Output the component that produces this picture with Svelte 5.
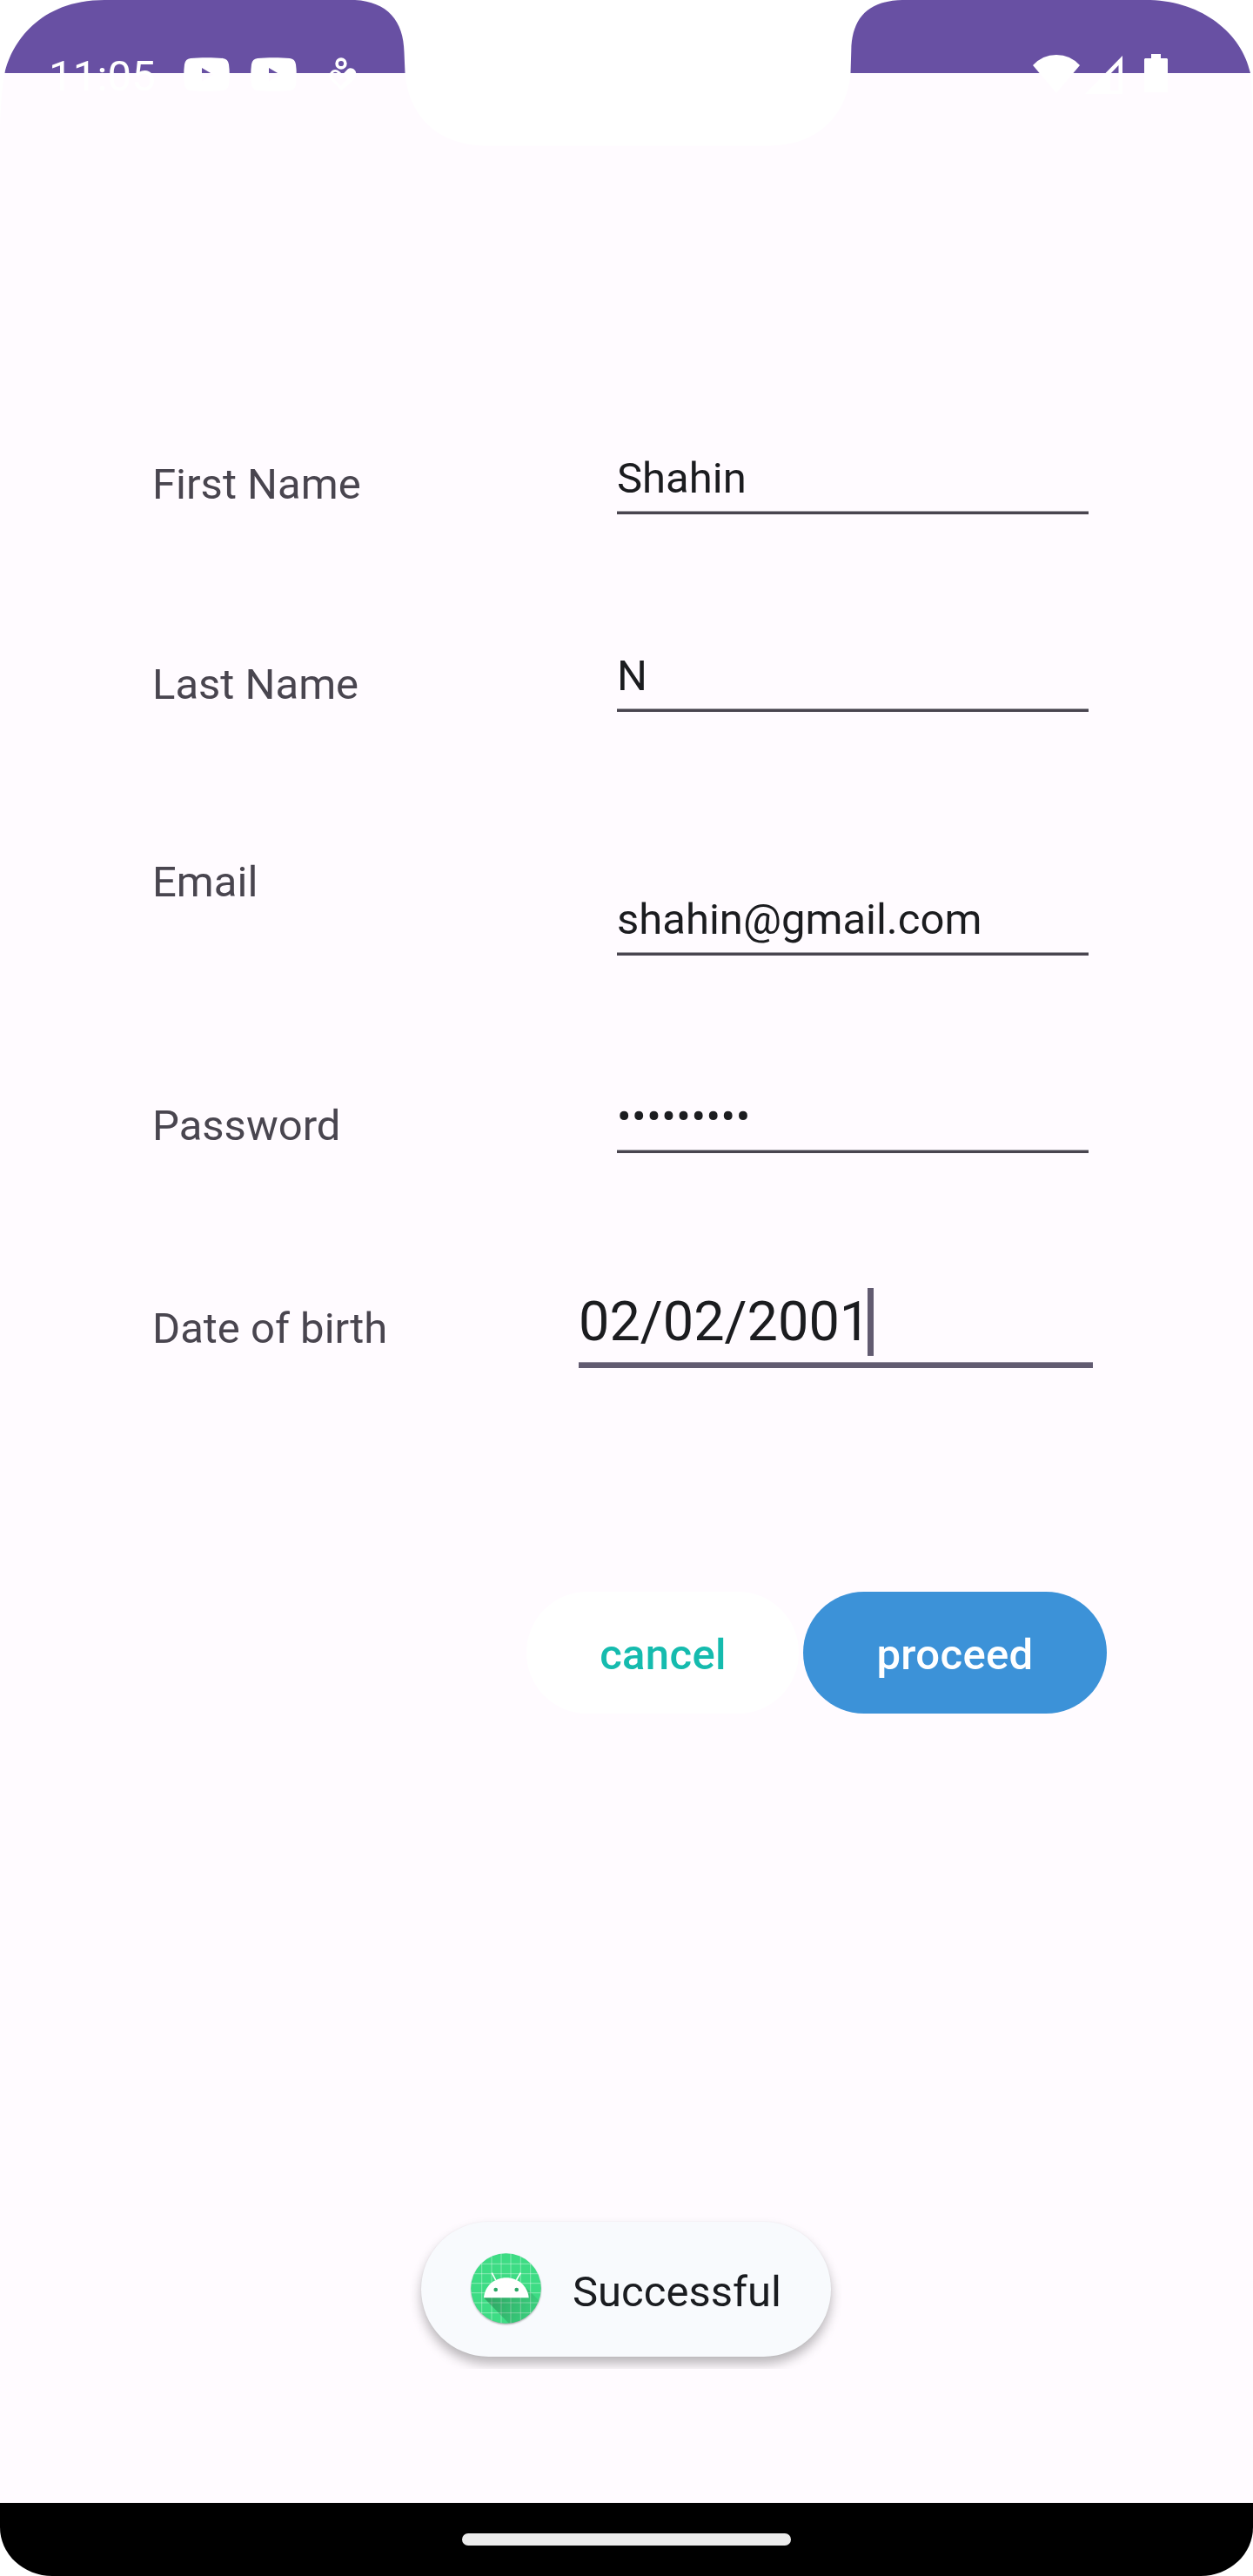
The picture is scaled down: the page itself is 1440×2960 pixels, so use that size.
<script>
  const rows = [
    { id: 'first', label: 'First Name', value: 'Shahin' },
    { id: 'last', label: 'Last Name', value: 'N' },
    { id: 'email', label: 'Email', value: 'shahin@gmail.com' },
    { id: 'password', label: 'Password', value: '•••••••••' },
    { id: 'dob', label: 'Date of birth', value: '02/02/2001', focused: true },
  ];
  const gridX = [12.7, 24, 35, 46, 57.3, 68.7];
  const gridY = [12.3, 23.7, 34.7, 45.7, 57, 68.7];
</script>

<div class="screen">
  <header class="status">
    <!-- Rounded display corners and camera notch -->
    <svg class="cutout" width="1440" height="170" viewBox="0 0 1440 170" fill="#fff">
      <path d="M0 0H120C45 0 13 50 5.5 84C1.5 104 0 130 0 168Z" />
      <path d="M408 0C445 2 464 24 464.5 60L465.5 84C469 128 498 167 558 167.5H884C944 167 974 128 977.5 84L978.3 58C979 22 996 1 1037 0Z" />
      <path d="M1322 0C1382 2 1427 38 1437 84C1439 104 1440 130 1440 168V0Z" />
    </svg>
    <span class="time">11:05</span>
    <div class="notices">
      {#each [0, 1] as n (n)}
        <svg width="53" height="39" viewBox="0 0 53 39" fill="#fff">
          <path fill-rule="evenodd" d="M8 1C18 0 35 0 45 1Q51 1.500 52 8Q53.500 19.500 52 31Q51 37.500 45 38C35 39 18 39 8 38Q2 37.500 1 31Q-.5 19.500 1 8Q2 1.500 8 1ZM21 12V27.500L34 19.700Z" />
        </svg>
      {/each}
      <svg class="care" width="32" height="40" viewBox="0 0 32 40" fill="none" stroke="#fff">
        <circle cx="14" cy="8" r="4.900" stroke-width="3.600" />
        <path stroke-width="3" d="M14 36L3.500 25.500C-1 20 6 13.500 11 18L14 21" />
        <path fill="#fff" stroke="none" d="M12 24.500L21.500 14.500C26 11 33 16 31 22C30 26 22 33 14 39L11 36L21 26L17 22L14 26Z" />
      </svg>
    </div>
    <div class="system">
      <svg width="54" height="46" viewBox="0 0 54 46" fill="#fff"><path d="M0 13Q11 1 27 1T54 13L27 45Z" /></svg>
      <svg class="signal" width="44" height="46" viewBox="0 0 44 46" fill="#fff"><path fill-rule="evenodd" d="M43 1V45H0ZM38.500 12L29 22V41H38.500Z" /></svg>
      <svg class="battery" width="27" height="46" viewBox="0 0 27 46" fill="#fff"><path d="M8 0H19V5H26L27 6V44H0V6L1 5H8Z" /></svg>
    </div>
  </header>

  <main>
    {#each rows as row (row.id)}
      <div class="row {row.id}">
        <span class="label">{row.label}</span>
        <div class="field" class:focused={row.focused}>
          <span class="value">{row.value}</span>{#if row.focused}<i class="caret"></i>{/if}
        </div>
      </div>
    {/each}
    <div class="actions">
      <button class="cancel">cancel</button>
      <button class="proceed">proceed</button>
    </div>
  </main>

  <div class="toast">
    <svg width="83" height="85" viewBox="-1 -1 83 85">
      <defs>
        <clipPath id="disc"><circle cx="40.500" cy="40.500" r="40.300" /></clipPath>
        <linearGradient id="shade" x1="15" y1="51" x2="70" y2="80" gradientUnits="userSpaceOnUse">
          <stop offset="0" stop-color="#000" stop-opacity=".26" />
          <stop offset="1" stop-color="#000" stop-opacity=".05" />
        </linearGradient>
        <filter id="soft"><feGaussianBlur stdDeviation=".8" /></filter>
      </defs>
      <circle cx="40.500" cy="41.800" r="40" fill="#000" opacity=".4" filter="url(#soft)" />
      <g clip-path="url(#disc)">
        <rect width="81" height="81" fill="#3ddc84" />
        {#each gridX as x (x)}<line x1={x} x2={x} y1="0" y2="81" class="mesh" />{/each}
        {#each gridY as y (y)}<line x1="0" x2="81" y1={y} y2={y} class="mesh" />{/each}
        <path d="M15 51.300L45 82H82V58L64 40Z" fill="url(#shade)" />
        <path d="M24.300 22.700L28.700 31M57.300 22.700L52.500 31" stroke="#fff" stroke-width="1.600" />
        <path fill="#fff" d="M15 51.300C16 38 27 28.300 40.800 28.300S65.500 38 66.700 51.300Z" />
        <circle cx="28.700" cy="42" r="2.300" fill="#2ba866" />
        <circle cx="52.700" cy="42" r="2.300" fill="#2ba866" />
      </g>
    </svg>
    <span>Successful</span>
  </div>

  <footer><i class="handle"></i></footer>
</div>

<style>
  :global(body) { margin: 0; background: #fff; }
  .screen {
    position: relative;
    display: flex;
    flex-direction: column;
    width: 1440px;
    height: 2960px;
    overflow: hidden;
    background: #fffbff;
    color: #1b1c1f;
    font: 400 49px/62px Roboto, sans-serif;
  }
  .status {
    position: relative;
    display: flex;
    align-items: flex-start;
    box-sizing: border-box;
    height: 170px;
    padding: 57px 98px 0 56px;
    background: linear-gradient(#6850a3 84px, transparent 84px);
    color: #fff;
  }
  .cutout { position: absolute; top: 0; left: 0; }
  .time { width: 155px; letter-spacing: .2px; }
  .notices { display: flex; gap: 24px; padding-top: 8.500px; }
  .care { margin-left: 12.500px; margin-top: -.5px; }
  .system { display: flex; margin-left: auto; padding-top: 5px; }
  .signal { margin-left: 6px; margin-top: 1px; }
  .battery { margin-left: 24px; }

  main { flex: 1; padding-top: 349px; }
  .row { display: flex; align-items: flex-start; height: 72px; margin-bottom: 155px; }
  .label { width: 534px; margin-left: 175px; color: #49454f; white-space: nowrap; }
  .field {
    display: flex;
    box-sizing: border-box;
    width: 542px;
    height: 72px;
    background: linear-gradient(#a3a1a7 1px, #49454f 1px) bottom / 100% 4px no-repeat;
  }
  .first .label { margin-top: 7px; }
  .last .label, .password .label { margin-top: 10px; }
  .last { margin-bottom: 165px; }
  .email { height: 115px; }
  .email .field { margin-top: 43px; }
  .password .value { letter-spacing: .55px; }
  .dob { height: 92px; margin-bottom: 257px; }
  .dob .label { width: 490px; margin-top: 16px; }
  .focused {
    width: 591px;
    height: 92px;
    background: linear-gradient(#938d9e 1px, #625b71 1px) bottom / 100% 7px no-repeat;
    font-size: 63px;
    line-height: 78px;
  }
  .caret { width: 7px; height: 78px; margin-left: -3px; background: #625b71; }

  .actions { display: flex; gap: 5px; padding-left: 605px; }
  button {
    box-sizing: border-box;
    height: 140px;
    padding: 6px 0 0;
    border: 0;
    border-radius: 70px;
    font: 500 49px/60px Roboto, sans-serif;
    letter-spacing: .35px;
  }
  .cancel { width: 313px; padding-left: 1px; background: #fff; color: #15bbae; }
  .proceed { width: 349px; background: #3c92d8; color: #fff; }

  .toast {
    position: absolute;
    top: 2553px;
    left: 484px;
    display: flex;
    align-items: center;
    box-sizing: border-box;
    width: 471px;
    height: 155px;
    padding-left: 56px;
    border-radius: 78px;
    background: #f8fafd;
    box-shadow: 0 8px 13px rgba(0, 0, 0, .28), 0 0 2px rgba(0, 0, 0, .05);
    clip-path: inset(-20px -30px -14px);
    color: #1a1c20;
  }
  .toast span { margin: 7px 0 0 35px; }
  .mesh { stroke: #fff; stroke-width: .8; opacity: .5; }

  footer {
    display: flex;
    justify-content: center;
    box-sizing: border-box;
    height: 84px;
    padding-top: 35px;
    border-radius: 0 0 60px 60px / 0 0 56px 56px;
    background: #000;
    box-shadow: 0 60px 0 60px #fff;
    clip-path: inset(0);
  }
  .handle { width: 378px; height: 14px; border-radius: 7px; background: #ebebeb; }
</style>
